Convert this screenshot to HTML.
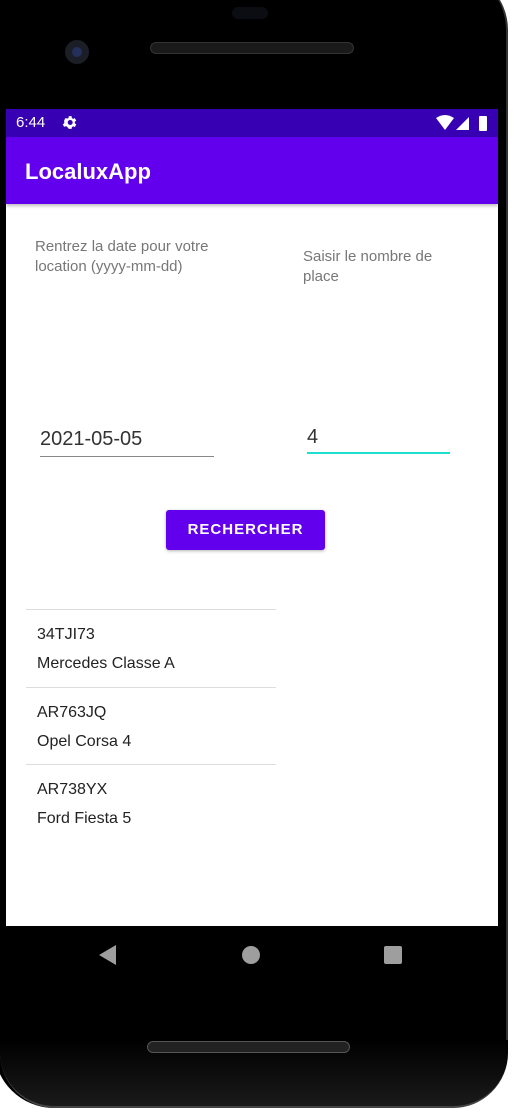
<!DOCTYPE html>
<html><head><meta charset="utf-8"><style>
*{margin:0;padding:0;box-sizing:border-box}
body{width:514px;height:1116px;background:#fff;position:relative;overflow:hidden;font-family:"Liberation Sans",sans-serif}
.phone{position:absolute;left:-6px;top:-30px;width:514px;height:1138px;background:#000;border-radius:0 60px 60px 60px;border-right:2px solid #333}
.frame{position:absolute;left:0;top:1040px;width:508px;height:68px;background:linear-gradient(#000,#1a1a1a);border-radius:0 0 55px 55px;border-bottom:2px solid #444}
.a{position:absolute}
.screen{position:absolute;left:6px;top:109px;width:492px;height:817px;background:#fff}
.status{position:absolute;left:0;top:0;width:492px;height:28px;background:#3700b3;color:#fff;font-size:15px}
.appbar{position:absolute;left:0;top:28px;width:492px;height:67px;background:#6200ee;color:#fff;font-size:22px;font-weight:bold;box-shadow:0 2px 3px rgba(0,0,0,.25)}
.lbl{color:#777;font-size:15px;line-height:20px}
.item{position:absolute;left:20px;width:250px;border-top:1px solid #ddd;height:78px;font-size:16px;color:#222}
.item div{position:absolute;left:11px}
</style></head><body>
<div class="phone"></div>
<div class="frame"></div>
<div class="a" style="left:232px;top:7px;width:36px;height:12px;background:#0b0d12;border-radius:6px"></div>
<div class="a" style="left:65px;top:40px;width:24px;height:24px;background:#1b1e26;border-radius:50%"><div style="position:absolute;left:7px;top:7px;width:10px;height:10px;background:#22305a;border-radius:50%"></div></div>
<div class="a" style="left:150px;top:42px;width:204px;height:12px;border:1px solid #333;background:#1a1a1a;border-radius:6px"></div>
<div class="screen">
<div class="status"><span class="a" style="left:10px;top:5px">6:44</span>
<svg class="a" style="left:55px;top:5px" width="17" height="17" viewBox="0 0 24 24"><path fill="#fff" d="M19.4 13a7.5 7.5 0 000-2l2.1-1.6-2-3.5-2.5 1a7 7 0 00-1.7-1L15 3h-4l-.4 2.6a7 7 0 00-1.7 1l-2.5-1-2 3.5L4.6 11a7.5 7.5 0 000 2l-2.1 1.6 2 3.5 2.5-1a7 7 0 001.7 1L11 21h4l.4-2.6a7 7 0 001.7-1l2.5 1 2-3.5zM13 15.5a3.5 3.5 0 110-7 3.5 3.5 0 010 7z"/></svg>
<svg class="a" style="left:430px;top:6px" width="56" height="17" viewBox="0 0 56 17"><path fill="#fff" d="M0 3Q9-3 18 3L9 15z"/><path fill="#fff" d="M20 15L33 2V15z"/><rect x="43" y="1" width="8" height="15" rx="1" fill="#fff"/></svg>
</div>
<div class="appbar"><span class="a" style="left:19px;top:22px">LocaluxApp</span></div>
<div class="a lbl" style="left:29px;top:128px">Rentrez la date pour votre<br>location (yyyy-mm-dd)</div>
<div class="a lbl" style="left:297px;top:138px">Saisir le nombre de<br>place</div>
<div class="a" style="left:34px;top:319px;font-size:20px;color:#333">2021-05-05</div>
<div class="a" style="left:34px;top:347px;width:174px;height:1px;background:#888"></div>
<div class="a" style="left:301px;top:317px;font-size:20px;color:#333">4</div>
<div class="a" style="left:301px;top:343px;width:143px;height:2px;background:#1ee0d0"></div>
<div class="a" style="left:160px;top:401px;width:159px;height:40px;background:#6200ee;border-radius:3px;color:#fff;font-weight:bold;font-size:15px;letter-spacing:1px;text-align:center;line-height:40px;box-shadow:0 1px 3px rgba(0,0,0,.3)">RECHERCHER</div>
<div class="item" style="top:500px"><div style="top:16px">34TJI73</div><div style="top:45px">Mercedes Classe A</div></div>
<div class="item" style="top:578px"><div style="top:16px">AR763JQ</div><div style="top:45px">Opel Corsa 4</div></div>
<div class="item" style="top:655px"><div style="top:16px">AR738YX</div><div style="top:45px">Ford Fiesta 5</div></div>
</div>
<svg class="a" style="left:99px;top:945px" width="18" height="20"><path fill="#9e9e9e" d="M17 0V20L0 10z"/></svg>
<div class="a" style="left:242px;top:946px;width:18px;height:18px;border-radius:50%;background:#9e9e9e"></div>
<div class="a" style="left:384px;top:946px;width:18px;height:18px;border-radius:2px;background:#9e9e9e"></div>
<div class="a" style="left:147px;top:1041px;width:203px;height:12px;border:1px solid #555;background:#222;border-radius:6px"></div>
</body></html>
